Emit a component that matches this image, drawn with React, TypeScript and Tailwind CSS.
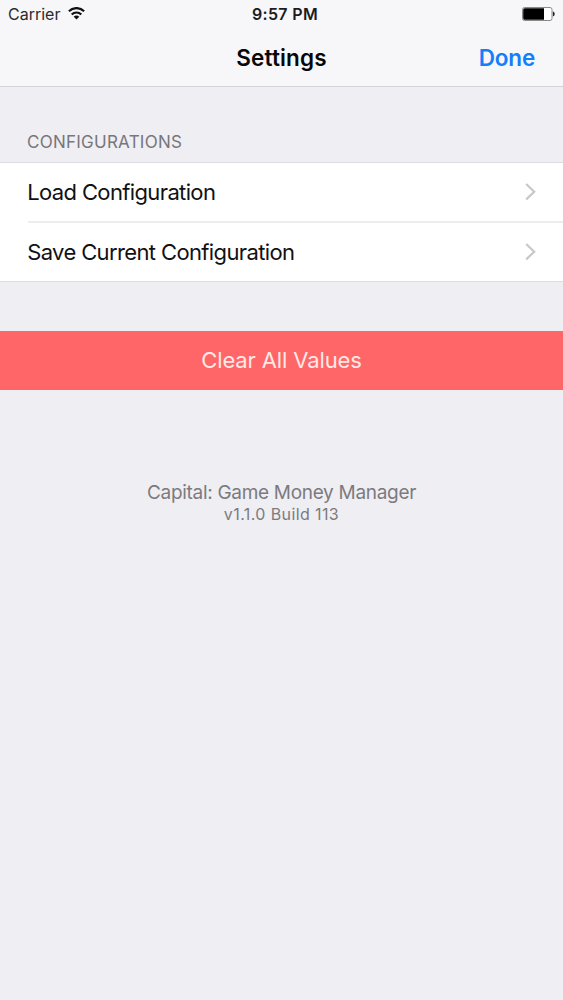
function StatusBar() {
  return (
    <div className="grid h-7 grid-cols-3 items-center pr-2 pl-2">
      <div className="flex items-center gap-2">
        <span className="text-[16px] leading-7 text-[#2b2b2d]">Carrier</span>
        <svg className="-mt-[2px]" width="17" height="13" viewBox="0 0 17 13" fill="none" stroke="#111" strokeWidth="2.2">
          <path d="M.9 4.2a10.8 10.8 0 0 1 15.2 0" />
          <path d="M3.7 7.5a6.8 6.8 0 0 1 9.6 0" />
          <path d="M8.5 12.4 5.7 9.8a3.9 3.9 0 0 1 5.6 0Z" fill="#111" stroke="none" />
        </svg>
      </div>
      <span className="pl-[7px] text-center text-[16px] leading-7 font-semibold tracking-[0.35px] whitespace-nowrap text-[#1c1c1e]">9:57 PM</span>
      <svg className="justify-self-end" width="33" height="14" viewBox="0 0 33 14">
        <rect x=".5" y=".5" width="29.5" height="13" rx="2" fill="#fff" stroke="#8a8a8c" />
        <path d="M2.7 1.2H22V12.8H2.7A1.5 1.5 0 0 1 1.2 11.3V2.7A1.5 1.5 0 0 1 2.7 1.2Z" fill="#000" />
        <path d="M30.9 4.6c2.4.5 2.4 4.3 0 4.8Z" fill="#222" />
      </svg>
    </div>
  );
}

function Chevron() {
  return (
    <svg width="12" height="18" viewBox="0 0 12 18" fill="none" stroke="#c7c7cc" strokeWidth="2.2">
      <path d="M1.2 1 9.2 8.7l-8 7.7" />
    </svg>
  );
}

export default function App() {
  return (
    <div className="flex min-h-[1000px] w-full flex-col bg-[#efeef3] font-[Inter,sans-serif]">
      <header className="h-[87px] border-b border-[#d3d2d6] bg-[#f7f6f9]">
        <StatusBar />
        <div className="grid h-[58px] grid-cols-3 items-center px-7 pt-px">
          <h1 className="col-start-2 text-center text-[22.5px] font-semibold tracking-[0.15px] text-[#08080a]">Settings</h1>
          <button className="justify-self-end text-[22.5px] font-semibold tracking-[-0.2px] text-[#157efb]">Done</button>
        </div>
      </header>

      <section>
        <h2 className="h-[75px] pt-[43px] pl-[27px] text-[17px] leading-6 tracking-[0.25px] text-[#77777b]">CONFIGURATIONS</h2>
        <div className="border-y border-[#dddce0] bg-white pl-7 text-[22px] tracking-[-0.63px] text-[#111113]">
          <div className="flex h-[60px] items-center justify-between border-b-2 border-[#ededf0] pr-[26px]">
            <span className="-ml-[0.8px]">Load Configuration</span>
            <Chevron />
          </div>
          <div className="flex h-[58px] items-center justify-between pr-[26px]">
            <span className="-ml-[0.8px]">Save Current Configuration</span>
            <Chevron />
          </div>
        </div>
      </section>

      <button className="mt-[49px] h-[59px] bg-[#ff6667] text-[22px] tracking-[-0.12px] text-[#ffe9e6]">Clear All Values</button>

      <footer className="mt-[91px] text-center text-[#7b7b7f]">
        <p className="text-[19px] leading-6 tracking-[-0.3px]">Capital: Game Money Manager</p>
        <p className="text-[16px] leading-[18px] tracking-[0.4px]">v1.1.0 Build 113</p>
      </footer>
    </div>
  );
}
